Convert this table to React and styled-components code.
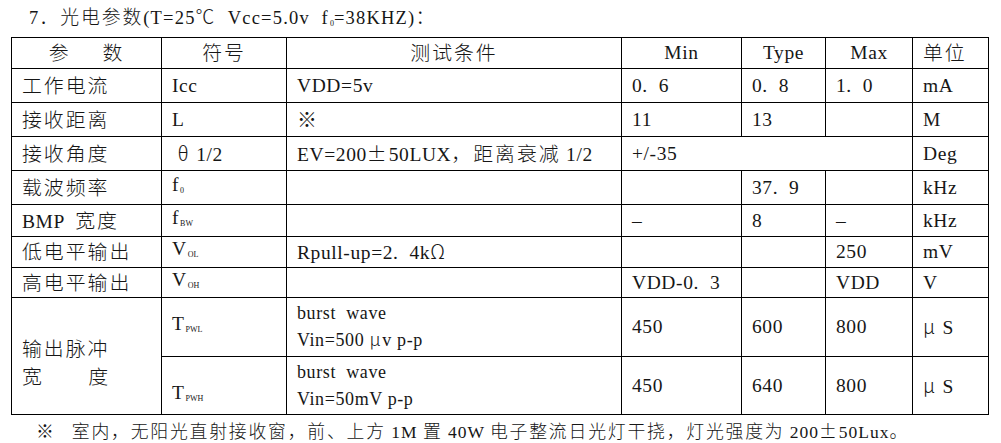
import React from "react";
import styled, { createGlobalStyle } from "styled-components";

const GlobalStyle = createGlobalStyle`
  html, body {
    margin: 0;
    background: #fff;
  }
  body {
    font-family: "Liberation Serif", "Noto Sans CJK SC", serif;
    color: #161616;
  }
`;

// runs of full-width glyphs (CJK, fullwidth punctuation, greek, ±, ※, ℃)
const WIDE = /([\u00B1\u0391-\u03C9\u203B\u2103\u3000-\u9FFF\uFF00-\uFFEF]+)/;

function Txt({ children }) {
  const parts = String(children).split(WIDE);
  return parts.map((p, i) => (i % 2 ? <Han key={i}>{p}</Han> : p));
}

function App() {
  return (
    <Page>
      <GlobalStyle />
      <Title>
        <span>
          <Txt>7．光电参数(T=25℃  Vcc=5.0v  f</Txt>
          <Sub>0</Sub>
          <Txt>=38KHZ)：</Txt>
        </span>
      </Title>

      <Table>
        <colgroup>
          <col style={{ width: 150 }} />
          <col style={{ width: 125 }} />
          <col style={{ width: 335 }} />
          <col style={{ width: 120 }} />
          <col style={{ width: 84 }} />
          <col style={{ width: 87 }} />
          <col style={{ width: 76 }} />
        </colgroup>
        <tbody>
          <Row $h={31}>
            <Head>
              <Pair>
                <Han>参</Han>
                <Han>数</Han>
              </Pair>
            </Head>
            <Head><Han>符号</Han></Head>
            <Head><Han>测试条件</Han></Head>
            <Head>Min</Head>
            <Head>Type</Head>
            <Head>Max</Head>
            <Cell><Han>单位</Han></Cell>
          </Row>

          <Row $h={34}>
            <Cell><Han>工作电流</Han></Cell>
            <Cell>Icc</Cell>
            <Cell>VDD=5v</Cell>
            <Cell>0.  6</Cell>
            <Cell>0.  8</Cell>
            <Cell>1.  0</Cell>
            <Cell>mA</Cell>
          </Row>

          <Row $h={34}>
            <Cell><Han>接收距离</Han></Cell>
            <Cell>L</Cell>
            <Cell><Han>※</Han></Cell>
            <Cell>11</Cell>
            <Cell>13</Cell>
            <Cell />
            <Cell>M</Cell>
          </Row>

          <Row $h={34}>
            <Cell><Han>接收角度</Han></Cell>
            <Cell><Txt>{"\u00a0θ 1/2"}</Txt></Cell>
            <Cell><Txt>EV=200±50LUX，距离衰减 1/2</Txt></Cell>
            <Cell colSpan={3}>+/-35</Cell>
            <Cell>Deg</Cell>
          </Row>

          <Row $h={34}>
            <Cell><Han>载波频率</Han></Cell>
            <Cell>f<Sub>0</Sub></Cell>
            <Cell />
            <Cell />
            <Cell>37.  9</Cell>
            <Cell />
            <Cell>kHz</Cell>
          </Row>

          <Row $h={32}>
            <Cell><Txt>BMP  宽度</Txt></Cell>
            <Cell>f<Sub>BW</Sub></Cell>
            <Cell />
            <Cell>–</Cell>
            <Cell>8</Cell>
            <Cell>–</Cell>
            <Cell>kHz</Cell>
          </Row>

          <Row $h={31}>
            <Cell><Han>低电平输出</Han></Cell>
            <Cell>V<Sub>OL</Sub></Cell>
            <Cell><Txt>Rpull-up=2.  4kΩ</Txt></Cell>
            <Cell />
            <Cell />
            <Cell>250</Cell>
            <Cell>mV</Cell>
          </Row>

          <Row $h={30}>
            <Cell><Han>高电平输出</Han></Cell>
            <Cell>V<Sub>OH</Sub></Cell>
            <Cell />
            <Cell>VDD-0.  3</Cell>
            <Cell />
            <Cell>VDD</Cell>
            <Cell>V</Cell>
          </Row>

          <Row $h={59}>
            <Cell rowSpan={2}>
              <NameStack>
                <Han>输出脉冲</Han>
                <Spread>
                  <Han>宽</Han>
                  <Han>度</Han>
                </Spread>
              </NameStack>
            </Cell>
            <Cell>T<Sub>PWL</Sub></Cell>
            <Cell>
              <Lines $lh={25}>
                <div>burst  wave</div>
                <div><Txt>Vin=500 μv p-p</Txt></div>
              </Lines>
            </Cell>
            <Cell>450</Cell>
            <Cell>600</Cell>
            <Cell>800</Cell>
            <Cell><Txt>μ S</Txt></Cell>
          </Row>

          <Row $h={58}>
            <Cell $low>T<Sub>PWH</Sub></Cell>
            <Cell>
              <Lines $lh={27}>
                <div>burst  wave</div>
                <div>Vin=50mV p-p</div>
              </Lines>
            </Cell>
            <Cell>450</Cell>
            <Cell>640</Cell>
            <Cell>800</Cell>
            <Cell><Txt>μ S</Txt></Cell>
          </Row>
        </tbody>
      </Table>

      <Note>
        <span>
          <Txt>※   室内，无阳光直射接收窗，前、上方 1M 置 40W 电子整流日光灯干挠，灯光强度为 200±50Lux。</Txt>
        </span>
      </Note>
    </Page>
  );
}

const Page = styled.div`
  width: 1001px;
  height: 443px;
  padding-left: 11px;
  box-sizing: border-box;
  overflow: hidden;
`;

const Han = styled.span`
  font-family: "Noto Sans CJK SC", sans-serif;
  font-weight: 300;
  font-size: 1.02em;
  letter-spacing: 0.1em;
`;

const Sub = styled.span`
  font-family: "Liberation Serif", serif;
  font-size: 8px;
  vertical-align: -2px;
  margin-left: 1px;
  letter-spacing: 0;
`;

const Title = styled.div`
  height: 37px;
  box-sizing: border-box;
  padding: 3px 0 0 18px;
  display: flex;
  align-items: center;
  font-size: 18.5px;
  line-height: 22px;
  letter-spacing: 1.2px;
  white-space: pre;
`;

const Table = styled.table`
  border-collapse: collapse;
  table-layout: fixed;
  width: 977px;
`;

const Row = styled.tr`
  height: ${(p) => p.$h}px;
`;

const Cell = styled.td`
  border: 1px solid #000;
  padding: ${(p) => (p.$low ? "20px 0 0 10px" : "0 0 0 10px")};
  font-size: 19.5px;
  line-height: 22px;
  letter-spacing: 0.6px;
  white-space: pre;
  vertical-align: middle;
  overflow: hidden;
`;

const Head = styled(Cell)`
  padding: 0;
  text-align: center;
`;

const Pair = styled.span`
  display: inline-flex;
  gap: 32px;
`;

const NameStack = styled.div`
  width: 88px;
  display: flex;
  flex-direction: column;
  gap: 6px;
  margin-top: 12px;
`;

const Spread = styled.div`
  display: flex;
  justify-content: space-between;
`;

const Lines = styled.div`
  line-height: ${(p) => p.$lh}px;
  font-size: 18px;
`;

const Note = styled.div`
  height: 29px;
  box-sizing: border-box;
  padding: 3px 0 0 25px;
  display: flex;
  align-items: center;
  font-size: 17.5px;
  line-height: 20px;
  letter-spacing: 1px;
  white-space: pre;
`;

export default App;
